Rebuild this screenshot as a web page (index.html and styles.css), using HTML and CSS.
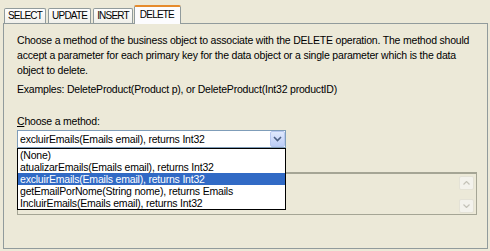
FILE: index.html
```html
<!DOCTYPE html>
<html lang="en">
<head>
    <meta charset="UTF-8">
    <title>DELETE method</title>
    <link rel="stylesheet" href="styles.css">
</head>
<body>
    <div class="tabs">
        <div class="tab">SELECT</div>
        <div class="tab">UPDATE</div>
        <div class="tab">INSERT</div>
        <div class="tab active">DELETE</div>
    </div>
    <div class="panel">
        <p class="intro">Choose a method of the business object to associate with the DELETE operation. The method should accept a parameter for each primary key for the data object or a single parameter which is the data object to delete.</p>
        <p class="examples">Examples: DeleteProduct(Product p), or DeleteProduct(Int32 productID)</p>
        <p class="label"><u>C</u>hoose a method:</p>
        <div class="combo-wrap">
            <div class="combo">
                <span class="combo-text">excluirEmails(Emails email), returns Int32</span>
                <span class="combo-btn">
                    <svg width="9" height="6" viewBox="0 0 9 6"><path d="M1 1 L4.5 4.5 L8 1" fill="none" stroke="#4d6185" stroke-width="1.6"/></svg>
                </span>
            </div>
            <ul class="list">
                <li>(None)</li>
                <li>atualizarEmails(Emails email), returns Int32</li>
                <li class="sel">excluirEmails(Emails email), returns Int32</li>
                <li>getEmailPorNome(String nome), returns Emails</li>
                <li>IncluirEmails(Emails email), returns Int32</li>
            </ul>
        </div>
        <div class="params">
            <div class="scroll">
                <span class="sbtn"><svg width="7" height="4" viewBox="0 0 7 4"><path d="M0.5 3.5 L3.5 0.5 L6.5 3.5" fill="none" stroke="#c4c2b8" stroke-width="1.2"/></svg></span>
                <span class="sbtn"><svg width="7" height="4" viewBox="0 0 7 4"><path d="M0.5 0.5 L3.5 3.5 L6.5 0.5" fill="none" stroke="#c4c2b8" stroke-width="1.2"/></svg></span>
            </div>
        </div>
    </div>
</body>
</html>
```
FILE: styles.css
```css
* {
    margin: 0;
    padding: 0;
    box-sizing: border-box;
}
body {
    background: #ece9d8;
    font-family: "Liberation Sans", Arial, sans-serif;
    font-size: 10.5px;
    letter-spacing: -0.2px;
    color: #000;
    width: 490px;
    height: 251px;
    overflow: hidden;
}
.tabs {
    display: flex;
    align-items: flex-end;
    padding: 4px 0 0 4px;
    height: 23px;
}
.tab {
    height: 15px;
    padding: 0 3px;
    margin-right: 2px;
    border: 1px solid #919b9c;
    border-bottom: none;
    border-radius: 2px 2px 0 0;
    background: linear-gradient(#fefefe, #f0f0ea);
    line-height: 14px;
    font-size: 10px;
    letter-spacing: -0.8px;
}
.tab.active {
    height: 19px;
    background: #fcfcfe;
    border-top: 2px solid #e68b2c;
    line-height: 16px;
    padding: 0 6px 0 5px;
    margin-left: -1px;
    margin-bottom: -1px;
    position: relative;
    z-index: 1;
}
.panel {
    margin: 0 2px 0 3px;
    height: 226px;
    border: 1px solid #919b9c;
    background: #ece9d8;
    padding: 9px 13px 0 13px;
}
.intro {
    line-height: 15px;
}
.examples {
    margin-top: 5px;
}
.label {
    margin-top: 20px;
}
.combo-wrap {
    position: relative;
    margin-top: 3px;
    width: 269px;
}
.combo {
    height: 18px;
    border: 1px solid #7f9db9;
    background: #fff;
    display: flex;
    align-items: center;
}
.combo-text {
    flex: 1;
    padding-left: 2px;
}
.combo-btn {
    width: 15px;
    height: 16px;
    background: linear-gradient(#e0e9fd, #bccdf7);
    border: 1px solid #b8c8f0;
    border-radius: 2px;
    display: flex;
    align-items: center;
    justify-content: center;
}
.list {
    position: absolute;
    left: 0;
    top: 18px;
    width: 269px;
    list-style: none;
    background: #fff;
    border: 1px solid #000;
    z-index: 2;
}
.list li {
    height: 12px;
    line-height: 12px;
    padding-left: 2px;
    white-space: nowrap;
}
.list li.sel {
    background: #316ac5;
    color: #fff;
}
.params {
    margin-top: 24px;
    width: 460px;
    height: 43px;
    border: 1px solid #a5a595;
    border-top-width: 2px;
    display: flex;
    justify-content: flex-end;
    padding: 2px 2px 1px 0;
}
.scroll {
    width: 15px;
    display: flex;
    flex-direction: column;
    justify-content: space-between;
}
.sbtn {
    height: 14px;
    border: 1px solid #e4e2d6;
    background: #f3f2ec;
    border-radius: 2px;
    display: flex;
    align-items: center;
    justify-content: center;
}
```
